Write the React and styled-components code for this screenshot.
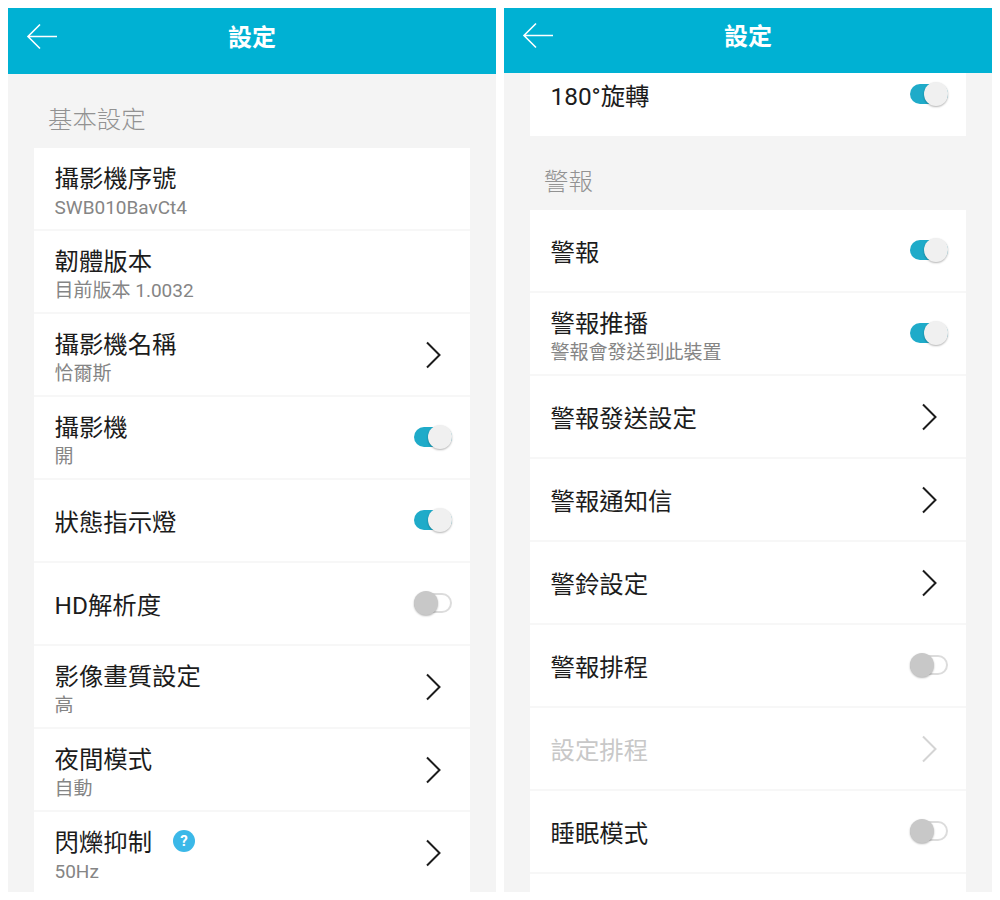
import styled, { createGlobalStyle } from "styled-components";

const Global = createGlobalStyle`
    html, body { margin: 0; padding: 0; background: #fff; }
    body { font-family: "Roboto", "Noto Sans CJK TC", sans-serif; }
`

const Page = styled.div`
    width: 1000px;
    height: 900px;
    padding: 8px;
    box-sizing: border-box;
    display: flex;
    gap: 8px;
`

const Screen = styled.div`
    width: 488px;
    height: 884px;
    background: #f4f4f4;
    overflow: hidden;
    display: flex;
    flex-direction: column;
`

const Header = styled.div`
    height: ${props => props.height}px;
    flex: none;
    box-sizing: border-box;
    padding-bottom: 12px;
    background: #00b1d3;
    display: flex;
    align-items: center;
    justify-content: center;
    position: relative;
    z-index: 1;
    color: #fff;
    font-size: 24px;
    font-weight: 700;
    svg { position: absolute; left: 18px; top: ${props => props.height - 51}px; }
`

const Content = styled.div`
    padding: 0 26px;
    margin-top: ${props => props.offset || 0}px;
`

const SectionTitle = styled.div`
    height: 74px;
    padding: 12px 0 0 14px;
    box-sizing: border-box;
    display: flex;
    align-items: center;
    color: #929292;
    font-size: 24.4px;
    font-weight: 300;
`

const Card = styled.div`
    background: #fff;
`

const Row = styled.div`
    height: 83px;
    box-sizing: border-box;
    padding: 0 18px 0 20.5px;
    display: flex;
    align-items: center;
    justify-content: space-between;
    border-bottom: 2px solid #f7f7f7;
    &:last-child { border-bottom: none; height: 82px; }
`

const Texts = styled.div`
    padding-top: ${props => props.two ? 8 : 4}px;
`

const Title = styled.div`
    display: flex;
    align-items: center;
    font-size: 24.4px;
    line-height: 30px;
    color: ${props => props.disabled ? "#c8c8c8" : "#1c1c1c"};
`

const Sub = styled.div`
    font-size: 19px;
    line-height: 28px;
    color: #858585;
`

const Help = styled.span`
    width: 22px;
    height: 22px;
    margin: 0 0 4px 21px;
    border-radius: 50%;
    background: #3bb8e8;
    color: #fff;
    font-size: 15px;
    font-weight: 700;
    line-height: 22px;
    text-align: center;
`

const Track = styled.div`
    position: relative;
    width: 38px;
    height: 20px;
    box-sizing: border-box;
    border-radius: 10px;
    background: ${props => props.on ? "#1fabc9" : "#fff"};
    border: ${props => props.on ? "none" : "2px solid #dcdcdc"};
    margin-bottom: 2px;
`

const Thumb = styled.div`
    position: absolute;
    top: ${props => props.on ? -2 : -4}px;
    left: ${props => props.on ? 14 : -2}px;
    width: 24px;
    height: 24px;
    border-radius: 50%;
    background: ${props => props.on ? "#f0f0f0" : "#c8c8c8"};
    box-shadow: 0 1px 2px rgba(0, 0, 0, .3);
`

const ChevronIcon = styled.svg`
    margin-right: 10px;
`

const Toggle = ({ on }) => <Track on={on ? 1 : 0}><Thumb on={on ? 1 : 0} /></Track>

const Chevron = ({ disabled }) => (
    <ChevronIcon width="18" height="28" viewBox="0 0 18 28" fill="none" stroke={disabled ? "#d4d4d4" : "#1c1c1c"} strokeWidth="2">
        <path d="M3 1.5 L15.5 14 L3 26.5" />
    </ChevronIcon>
)

const BackArrow = () => (
    <svg width="32" height="28" viewBox="0 0 32 28" fill="none" stroke="#fff" strokeWidth="1.6">
        <path d="M31 13.5 H2 M14 1.5 L2 13.5 L14 25.5" />
    </svg>
)

const Item = ({ title, sub, help, right, disabled }) => (
    <Row>
        <Texts two={sub ? 1 : 0}>
            <Title disabled={disabled}>{title}{help && <Help>?</Help>}</Title>
            {sub && <Sub>{sub}</Sub>}
        </Texts>
        {right === "chevron" && <Chevron disabled={disabled} />}
        {right === "on" && <Toggle on />}
        {right === "off" && <Toggle />}
    </Row>
)

const App = () => (
    <Page>
        <Global />
        <Screen>
            <Header height={66}><BackArrow />設定</Header>
            <Content>
                <SectionTitle>基本設定</SectionTitle>
                <Card>
                    <Item title="攝影機序號" sub="SWB010BavCt4" />
                    <Item title="韌體版本" sub="目前版本 1.0032" />
                    <Item title="攝影機名稱" sub="恰爾斯" right="chevron" />
                    <Item title="攝影機" sub="開" right="on" />
                    <Item title="狀態指示燈" right="on" />
                    <Item title="HD解析度" right="off" />
                    <Item title="影像畫質設定" sub="高" right="chevron" />
                    <Item title="夜間模式" sub="自動" right="chevron" />
                    <Item title="閃爍抑制" sub="50Hz" help right="chevron" />
                </Card>
            </Content>
        </Screen>
        <Screen>
            <Header height={65}><BackArrow />設定</Header>
            <Content offset={-19}>
                <Card>
                    <Item title="180°旋轉" right="on" />
                </Card>
                <SectionTitle>警報</SectionTitle>
                <Card>
                    <Item title="警報" right="on" />
                    <Item title="警報推播" sub="警報會發送到此裝置" right="on" />
                    <Item title="警報發送設定" right="chevron" />
                    <Item title="警報通知信" right="chevron" />
                    <Item title="警鈴設定" right="chevron" />
                    <Item title="警報排程" right="off" />
                    <Item title="設定排程" right="chevron" disabled />
                    <Item title="睡眠模式" right="off" />
                    <Item title="" />
                </Card>
            </Content>
        </Screen>
    </Page>
)

export default App
